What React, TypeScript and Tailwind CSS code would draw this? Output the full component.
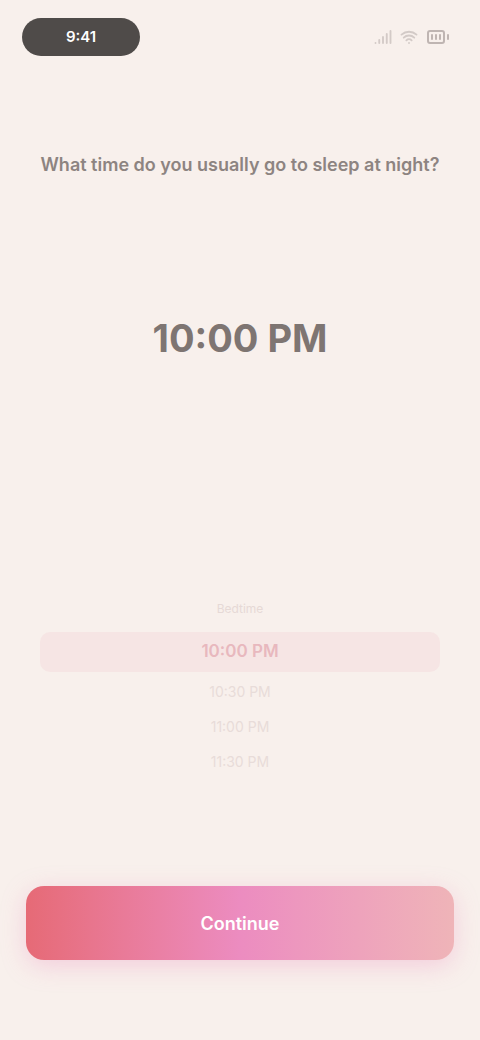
import { Signal, Wifi, BatteryFull } from 'lucide-react';

const rows = ['10:00 PM', '10:30 PM', '11:00 PM', '11:30 PM'];

export default function App() {
  const selected = 0;

  return (
    <div
      className="w-[480px] h-[1040px] bg-[#f8f0ec] flex flex-col overflow-hidden"
      style={{ fontFamily: 'Inter, "Liberation Sans", sans-serif' }}
    >
      {/* status bar */}
      <div className="flex items-center justify-between px-[22px] pt-[12px] h-[62px]">
        <div className="w-[118px] h-[38px] rounded-full bg-[#4f4b49] flex items-center justify-center text-white text-[15px] font-semibold">
          9:41
        </div>
        <div className="flex items-center gap-2 pr-[8px] text-[#d3cac7]">
          <Signal size={18} strokeWidth={2.5} />
          <Wifi size={18} strokeWidth={2.5} />
          <BatteryFull size={24} strokeWidth={2} className="text-[#bfb5b2]" />
        </div>
      </div>

      {/* question */}
      <div className="px-[34px] mt-[90px]">
        <h1 className="text-[18px] leading-[26px] font-semibold text-[#8d8481] text-center whitespace-nowrap">
          What time do you usually go to sleep at night?
        </h1>
      </div>

      {/* current value */}
      <div className="mt-[138px] flex justify-center">
        <p className="text-[38px] leading-[44px] font-bold text-[#7e7572]">10:00 PM</p>
      </div>

      {/* picker */}
      <div className="mt-[240px] flex flex-col items-center">
        <p className="text-[12px] text-[#e6d9d6] mb-[14px]">Bedtime</p>
        <div className="w-full px-[40px] flex flex-col">
          {rows.map((r, i) => (
            <div
              key={r}
              className={
                i === selected
                  ? 'h-[40px] mb-[2px] rounded-[10px] bg-[#f6e5e4] flex items-center justify-center text-[17px] font-semibold text-[#e8b8be]'
                  : 'h-[35px] flex items-center justify-center text-[14px] text-[#e8dcd9]'
              }
            >
              {r}
            </div>
          ))}
        </div>
      </div>

      {/* button */}
      <div className="mt-auto mb-[80px] px-[26px]">
        <button className="w-full h-[74px] rounded-[18px] bg-gradient-to-r from-[#e66a76] via-[#ec8cc0] to-[#efb4b8] text-white text-[18px] font-semibold shadow-[0_6px_24px_rgba(236,140,190,0.35)]">
          Continue
        </button>
      </div>
    </div>
  );
}
